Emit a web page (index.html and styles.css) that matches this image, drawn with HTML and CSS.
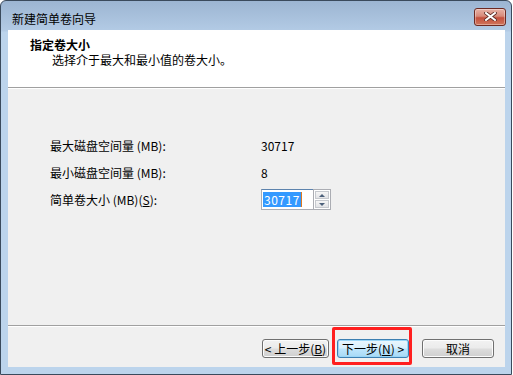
FILE: index.html
```html
<!DOCTYPE html>
<html lang="zh-CN">
<head>
    <meta charset="UTF-8">
    <title>新建简单卷向导</title>
    <link rel="stylesheet" href="styles.css">
</head>
<body>
    <div class="window">
        <div class="titlebar">
            <span class="title">新建简单卷向导</span>
            <button class="close" aria-label="关闭">
                <svg width="13" height="9" viewBox="0 0 13 9">
                    <path d="M2 1 L11 8 M11 1 L2 8" stroke="#5a2a24" stroke-width="3.6" stroke-linecap="square"/>
                    <path d="M2 1 L11 8 M11 1 L2 8" stroke="#ffffff" stroke-width="2" stroke-linecap="square"/>
                </svg>
            </button>
        </div>
        <div class="client">
            <div class="header">
                <div class="heading">指定卷大小</div>
                <div class="subheading">选择介于最大和最小值的卷大小。</div>
            </div>
            <div class="content">
                <div class="row">
                    <span class="label">最大磁盘空间量 (MB):</span>
                    <span class="value">30717</span>
                </div>
                <div class="row">
                    <span class="label">最小磁盘空间量 (MB):</span>
                    <span class="value">8</span>
                </div>
                <div class="row">
                    <span class="label">简单卷大小 (MB)(<u>S</u>):</span>
                    <div class="spin">
                        <div class="spin-input"><span class="selected">30717</span><span class="caret"></span></div>
                        <div class="spin-buttons">
                            <div class="spin-btn"><span class="tri up"></span></div>
                            <div class="spin-btn"><span class="tri down"></span></div>
                        </div>
                    </div>
                </div>
            </div>
            <div class="footer">
                <button class="btn">&lt; 上一步(<u>B</u>)</button>
                <div class="highlight-wrap">
                    <button class="btn btn-hot">下一步(<u>N</u>) &gt;</button>
                    <div class="mark"></div>
                </div>
                <button class="btn btn-cancel">取消</button>
            </div>
        </div>
    </div>
</body>
</html>
```
FILE: styles.css
```css
body {
    margin: 0;
    background: #ffffff;
    font-family: "Noto Sans CJK SC", "Liberation Sans", sans-serif;
    font-size: 12px;
    color: #000000;
}
.window {
    width: 512px;
    height: 375px;
    box-sizing: border-box;
    border: 1px solid #3a4a5c;
    border-radius: 6px 6px 0 0;
    background: linear-gradient(#9cb5d2 0px, #b3cbe5 30px, #bcd4ec 31px);
    padding: 0 6px 7px 7px;
    display: flex;
    flex-direction: column;
}
.titlebar {
    height: 29px;
    display: flex;
    align-items: center;
    justify-content: space-between;
    padding: 0 0 0 4px;
}
.title {
    font-size: 12px;
    line-height: 14px;
    margin-top: 6px;
    color: #000000;
}
.close {
    width: 32px;
    height: 18px;
    margin: 2px -1px 0 0;
    padding: 0;
    border: 1px solid #6e2a22;
    border-radius: 3px;
    background: linear-gradient(#e8b2a6 0%, #d88a7a 45%, #c4503e 55%, #d0765c 100%);
    box-shadow: inset 0 0 0 1px rgba(255, 255, 255, 0.35);
    display: flex;
    align-items: center;
    justify-content: center;
}
.client {
    flex: 1;
    display: flex;
    flex-direction: column;
    background: #f0f0f0;
}
.header {
    height: 58px;
    background: #ffffff;
    border-bottom: 1px solid #a0a0a0;
    box-sizing: border-box;
    padding: 7px 0 0 22px;
}
.heading {
    font-weight: bold;
    line-height: 15px;
}
.subheading {
    line-height: 16px;
    padding-left: 22px;
}
.content {
    flex: 1;
    border-top: 1px solid #ffffff;
    border-bottom: 1px solid #a0a0a0;
    padding: 49px 0 0 42px;
    display: flex;
    flex-direction: column;
    gap: 13px;
}
.row {
    display: flex;
    align-items: center;
    height: 14px;
}
.label {
    width: 211px;
}
.spin {
    display: flex;
    height: 21px;
    margin-top: 1px;
}
.spin-input {
    width: 52px;
    box-sizing: border-box;
    background: #ffffff;
    border: 1px solid #abadb3;
    border-top-color: #5d83ad;
    border-right: none;
    display: flex;
    align-items: center;
    padding-left: 1px;
}
.selected {
    background: #3399ff;
    color: #ffffff;
    line-height: 15px;
    padding: 0 1px;
    letter-spacing: 0.5px;
}
.caret {
    width: 1px;
    height: 15px;
    background: #e07a20;
}
.spin-buttons {
    width: 18px;
    box-sizing: border-box;
    border: 1px solid #abadb3;
    background: #ffffff;
    padding: 1px;
    display: flex;
    flex-direction: column;
    gap: 1px;
}
.spin-btn {
    flex: 1;
    border: 1px solid #c6c9ce;
    background: linear-gradient(#f6f6f6, #e2e3e6);
    display: flex;
    align-items: center;
    justify-content: center;
}
.tri {
    width: 0;
    height: 0;
    border-left: 3px solid transparent;
    border-right: 3px solid transparent;
}
.tri.up {
    border-bottom: 3px solid #4c607a;
}
.tri.down {
    border-top: 3px solid #4c607a;
}
.footer {
    height: 41px;
    border-top: 1px solid #ffffff;
    box-sizing: border-box;
    display: flex;
    align-items: center;
    padding: 2px 0 0 254px;
}
.btn {
    width: 67px;
    height: 19px;
    padding: 0;
    border: 1px solid #707070;
    border-radius: 3px;
    background: linear-gradient(#f2f2f2 0%, #ebebeb 48%, #dddddd 52%, #cfcfcf 100%);
    box-shadow: inset 0 0 0 1px #fcfcfc;
    font-family: "Noto Sans CJK SC", "Liberation Sans", sans-serif;
    font-size: 12px;
    line-height: 15px;
    color: #000000;
}
.highlight-wrap {
    position: relative;
    margin-left: 8px;
}
.btn-hot {
    width: 72px;
    border-color: #3c7fb1;
    background: linear-gradient(#eaf6fd 0%, #d9f0fc 48%, #bee6fd 52%, #a7d9f5 100%);
    box-shadow: inset 0 0 0 1px #9ad6f7;
    display: block;
}
.mark {
    position: absolute;
    left: -5px;
    top: -12px;
    width: 80px;
    height: 38px;
    box-sizing: border-box;
    border: 3px solid #ff1f1f;
    border-radius: 2px;
}
.btn-cancel {
    width: 72px;
    margin-left: 13px;
}
```
